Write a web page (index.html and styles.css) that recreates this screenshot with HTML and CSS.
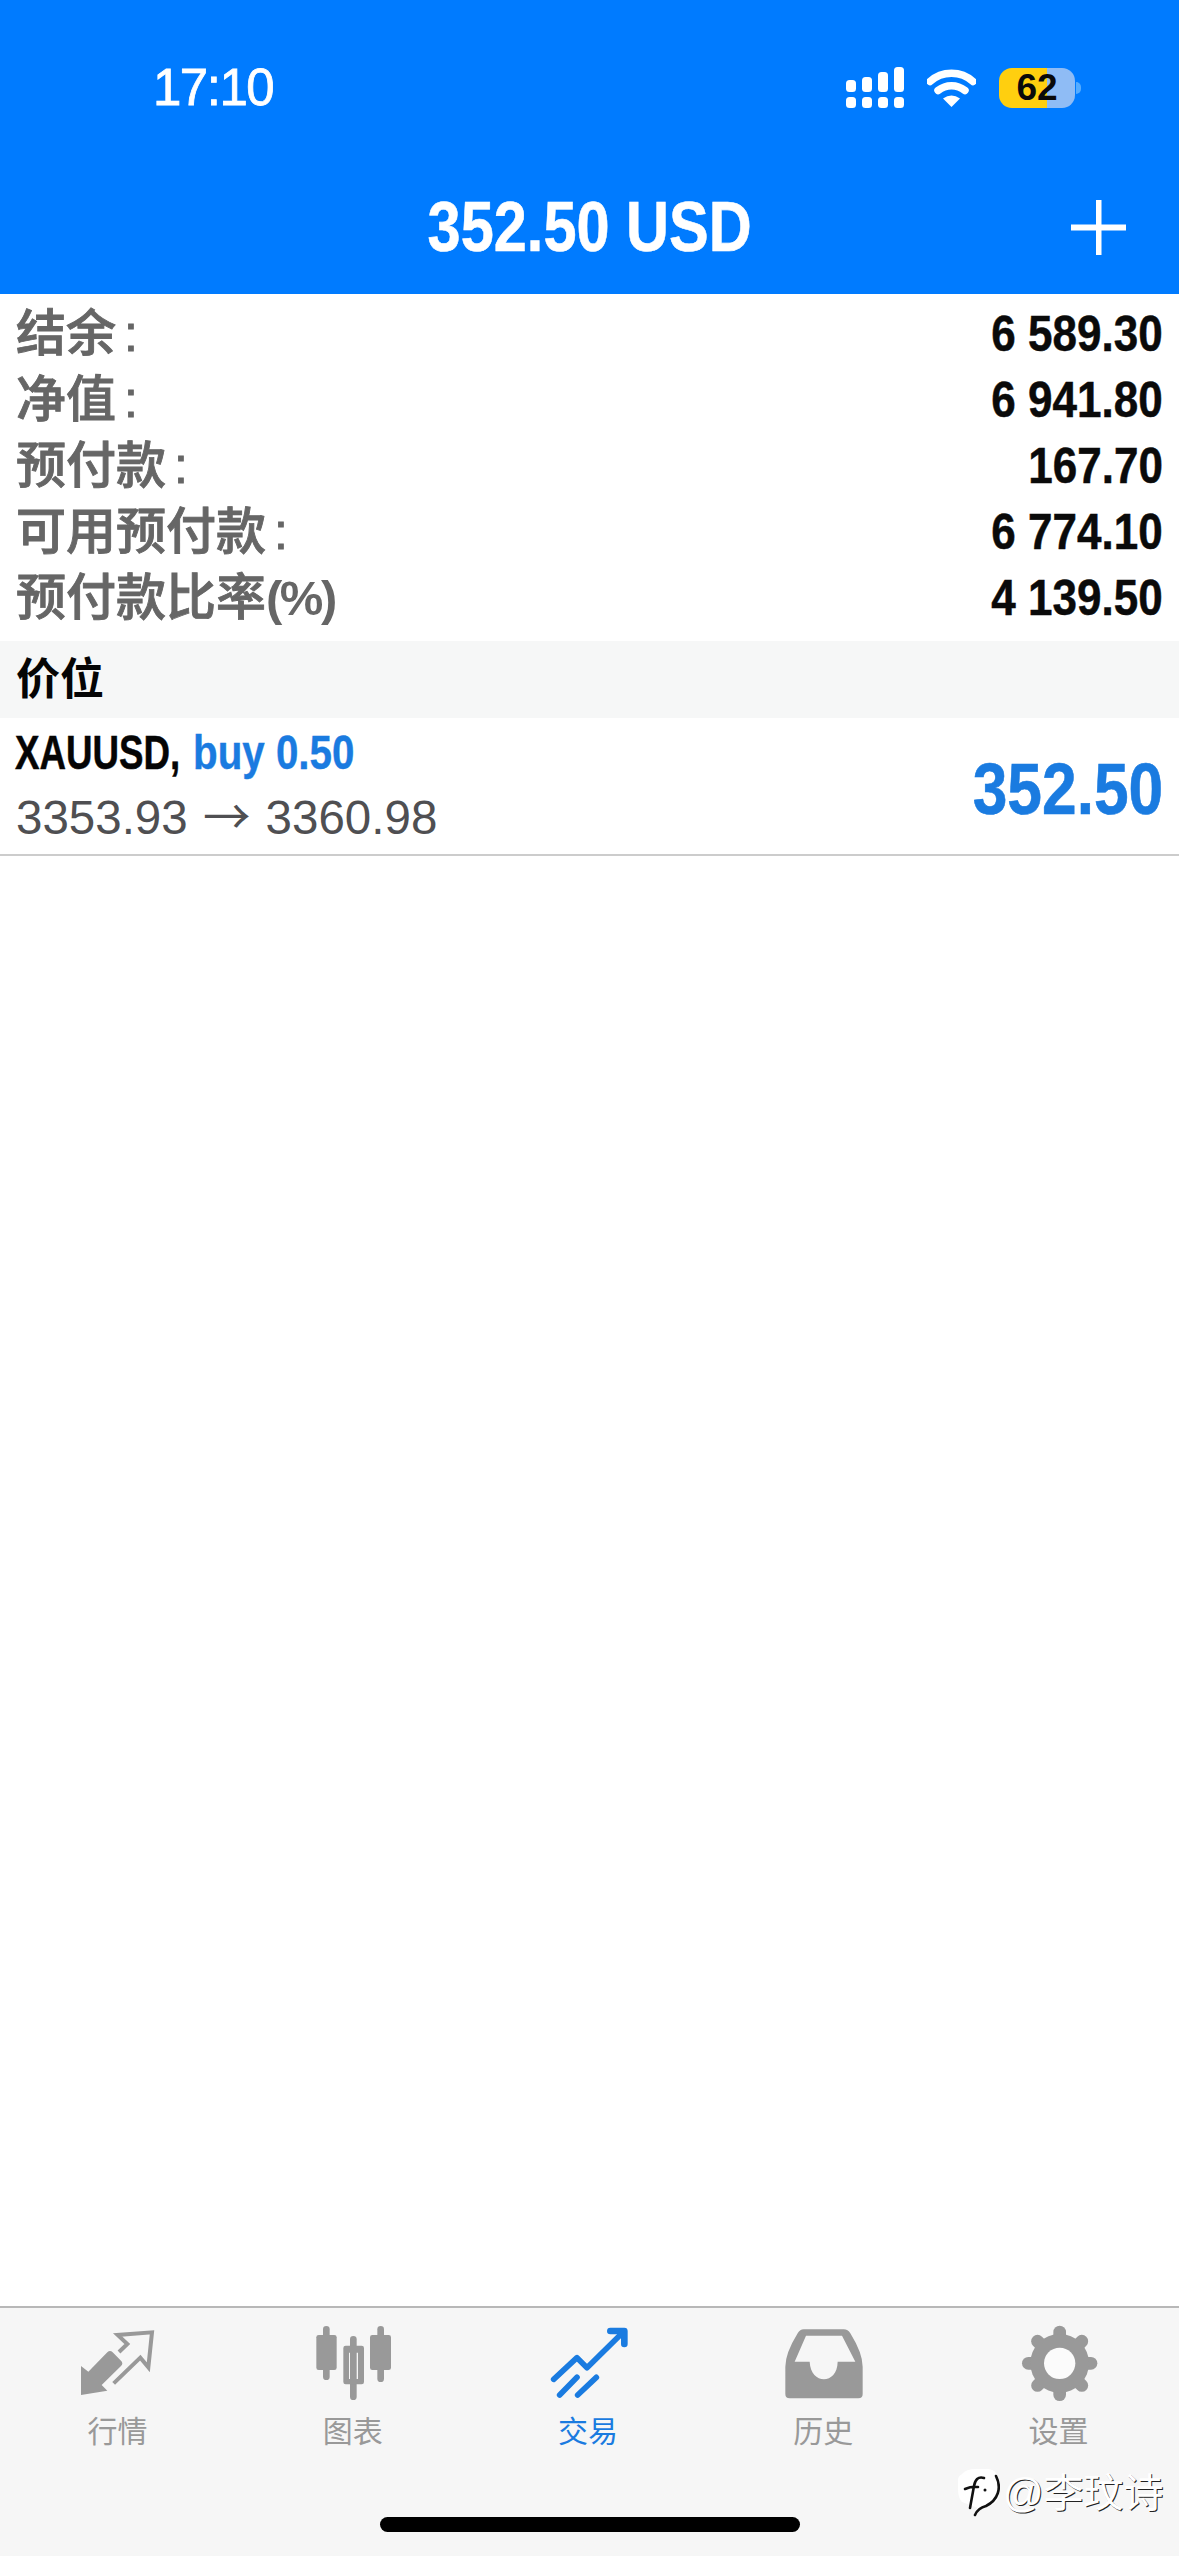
FILE: index.html
```html
<!DOCTYPE html>
<html lang="zh-CN">
<head>
<meta charset="utf-8">
<title>MetaTrader 交易</title>
<link rel="stylesheet" href="styles.css">
</head>
<body>
<div class="phone">
  <header class="top">
    <div class="status">
      <span class="time">17:10</span>
      <div class="status-icons">
        <svg class="signal" width="58" height="41" viewBox="0 0 58 41" fill="#fff">
          <rect x="0" y="13" width="10" height="12" rx="3.5"/>
          <rect x="16" y="10" width="10" height="15" rx="3.5"/>
          <rect x="32" y="5" width="10" height="20" rx="3.5"/>
          <rect x="48" y="0" width="10" height="25" rx="3.5"/>
          <rect x="0" y="30" width="10" height="11" rx="3.5"/>
          <rect x="16" y="30" width="10" height="11" rx="3.5"/>
          <rect x="32" y="30" width="10" height="11" rx="3.5"/>
          <rect x="48" y="30" width="10" height="11" rx="3.5"/>
        </svg>
        <svg class="wifi" width="49" height="38" viewBox="0 0 49 38">
          <path d="M3 12.500C15 1.500 34 1.500 46 12.500" fill="none" stroke="#fff" stroke-width="7.500" stroke-linecap="round"/>
          <path d="M11 21.500C19 15 30 15 38 21.500" fill="none" stroke="#fff" stroke-width="7.500" stroke-linecap="round"/>
          <path d="M24.500 38L16 29.500Q24.500 23.500 33 29.500Z" fill="#fff"/>
        </svg>
        <div class="battery-wrap">
          <div class="battery"><span>62</span></div>
          <i class="nub"></i>
        </div>
      </div>
    </div>
    <div class="titlebar">
      <span></span>
      <h1 class="title"><span class="sq-title">352.50 USD</span></h1>
      <svg class="plus" width="55" height="55" viewBox="0 0 55 55" fill="#fff">
        <rect x="0" y="24.500" width="55" height="6"/>
        <rect x="25" y="0" width="5.500" height="55"/>
      </svg>
    </div>
  </header>

  <main class="content">
    <section class="summary">
      <div class="row"><span class="label">结余<span class="colon">:</span></span><span class="num">6 589.30</span></div>
      <div class="row"><span class="label">净值<span class="colon">:</span></span><span class="num">6 941.80</span></div>
      <div class="row"><span class="label">预付款<span class="colon">:</span></span><span class="num">167.70</span></div>
      <div class="row"><span class="label">可用预付款<span class="colon">:</span></span><span class="num">6 774.10</span></div>
      <div class="row"><span class="label">预付款比率<span class="pct">(%)</span></span><span class="num">4 139.50</span></div>
    </section>
    <div class="band">价位</div>
    <section class="position">
      <div class="pos-left">
        <div class="pos-head"><span class="sym">XAUUSD,</span><span class="side">buy 0.50</span></div>
        <div class="pos-prices">3353.93 <span class="arrow">→</span> 3360.98</div>
      </div>
      <span class="profit">352.50</span>
    </section>
  </main>

  <nav class="tabbar">
    <div class="tabs">
      <div class="tab">
        <svg class="tab-icon" viewBox="-6 0 300 270">
          <path d="M33 138L55 155L112 97Q120 89 128 97L153 122Q161 130 153 138L95 195L112 212L33 225Z" fill="#999"/>
          <path d="M147 96L172 72L143 45L246 37L235 142L211 113L131 190" fill="none" stroke="#999" stroke-width="12"/>
        </svg>
        <span class="tab-label">行情</span>
      </div>
      <div class="tab">
        <svg class="tab-icon" viewBox="-3 0 300 270" fill="#999">
          <rect x="57" y="18" width="20" height="162" rx="10"/>
          <rect x="37" y="45" width="61" height="105" rx="7"/>
          <rect x="138" y="48" width="20" height="192" rx="10"/>
          <path fill-rule="evenodd" d="M125 77H173Q180 77 180 84V186Q180 193 173 193H125Q118 193 118 186V84Q118 77 125 77ZM135 98V177H162V98Z"/>
          <rect x="220" y="18" width="20" height="168" rx="10"/>
          <rect x="198" y="45" width="63" height="105" rx="7"/>
        </svg>
        <span class="tab-label">图表</span>
      </div>
      <div class="tab active">
        <svg class="tab-icon" viewBox="-7 0 300 270" fill="none" stroke="#1a7be0" stroke-width="17" stroke-linecap="round" stroke-linejoin="round">
          <path d="M40 178L110 113L140 143L245 40"/>
          <path d="M210 33H252V72" stroke-width="20"/>
          <path d="M58 225L110 172"/>
          <path d="M112 225L168 172"/>
        </svg>
        <span class="tab-label">交易</span>
      </div>
      <div class="tab">
        <svg class="tab-icon" viewBox="-7 0 300 270">
          <path fill="#999" fill-rule="evenodd" d="M85 28H205Q218 28 225 40Q262 100 262 140V222Q262 235 249 235H43Q30 235 30 222V140Q30 100 67 40Q74 28 85 28ZM92 47L58 125H103C106 195 186 195 187 125H240L200 47Z"/>
        </svg>
        <span class="tab-label">历史</span>
      </div>
      <div class="tab">
        <svg class="tab-icon" viewBox="-7 0 300 270">
          <g stroke="#999" stroke-width="38" stroke-linecap="round">
            <path d="M148 36V224"/>
            <path d="M54 130H242"/>
            <path d="M81.500 63.500L214.500 196.500"/>
            <path d="M214.500 63.500L81.500 196.500"/>
          </g>
          <circle cx="148" cy="130" r="88" fill="#999"/>
          <circle cx="148" cy="130" r="47" fill="#fbfbfb"/>
        </svg>
        <span class="tab-label">设置</span>
      </div>
    </div>
    <div class="home-bar"></div>
  </nav>

  <div class="watermark">
    <svg class="wm-logo" width="42" height="50" viewBox="0 0 42 50">
      <path d="M4 6Q8 1 18 1H30Q41 2 41 16V28Q38 40 20 40L4 34Q0 30 0 20V12Q0 8 4 6Z" fill="#fff"/>
      <path d="M26 10C20 8 17 12 16 18L12 40M7 21Q14 18 20 19" fill="none" stroke="#111" stroke-width="2.600" stroke-linecap="round"/>
      <path d="M38 8C44 20 40 32 28 38Q20 40 17 47" fill="none" stroke="#111" stroke-width="2.600" stroke-linecap="round"/>
      <circle cx="27" cy="22" r="1.500" fill="#111"/>
    </svg>
    <span class="wm-text">@李玟诗</span>
  </div>
</div>
</body>
</html>
```

FILE: styles.css
```css
* { box-sizing: border-box; }

html, body {
  margin: 0;
  padding: 0;
  background: #fff;
}

body {
  font-family: "Liberation Sans", "Noto Sans CJK SC", sans-serif;
}

.phone {
  position: relative;
  width: 1179px;
  height: 2556px;
  display: flex;
  flex-direction: column;
  overflow: hidden;
}

/* Header */
.top {
  height: 294px;
  flex: none;
  padding-top: 67px;
  background: #007bff;
  color: #fff;
}

.status {
  height: 41px;
  display: flex;
  align-items: center;
  justify-content: space-between;
  padding: 0 98px 0 153px;
}

.time {
  font-size: 51px;
  line-height: 41px;
  letter-spacing: -1.500px;
  -webkit-text-stroke: 0.8px #fff;
}

.status-icons {
  display: flex;
  align-items: center;
  gap: 23px;
}

.signal, .wifi { display: block; }

.battery-wrap {
  display: flex;
  align-items: center;
  gap: 1px;
}

.battery {
  width: 76px;
  height: 40px;
  border-radius: 13px;
  background: linear-gradient(90deg, #ffcf0f 0, #ffcf0f 63%, #8fbcf5 63%, #8fbcf5 100%);
  display: flex;
  align-items: center;
  justify-content: center;
  color: #0a0a0a;
  font-size: 37px;
  font-weight: 700;
}

.nub {
  width: 5px;
  height: 12px;
  border-radius: 0 6px 6px 0;
  background: #55acff;
}

.titlebar {
  margin-top: 92px;
  height: 55px;
  display: grid;
  grid-template-columns: 1fr auto 1fr;
  align-items: center;
  padding: 0 53px;
}

.plus { justify-self: end; }

.title {
  margin: 0;
  font-size: 70px;
  line-height: 55px;
  font-weight: 700;
  white-space: nowrap;
}

.sq-title {
  display: inline-block;
  transform: scaleX(0.85);
  -webkit-text-stroke: 0.6px #fff;
}

/* Content */
.content {
  flex: 1;
  background: #fff;
}

.summary { padding: 7px 0 10px; }

.row {
  height: 66px;
  display: flex;
  align-items: center;
  justify-content: space-between;
  padding: 0 16px;
}

.label {
  font-size: 50px;
  line-height: 66px;
  font-weight: 500;
  color: #666;
  white-space: nowrap;
  -webkit-text-stroke: 0.9px #666;
}

.colon { margin-left: 8px; }

.pct {
  font-size: 49px;
  font-weight: 700;
  letter-spacing: -2.500px;
  -webkit-text-stroke: 0;
}

.num {
  display: inline-block;
  font-size: 50px;
  font-weight: 700;
  color: #0a0a0a;
  transform: scaleX(0.88);
  transform-origin: right center;
  white-space: nowrap;
  -webkit-text-stroke: 0.5px #0a0a0a;
}

.band {
  height: 77px;
  padding-left: 16px;
  background: #f6f7f7;
  color: #050505;
  font-size: 44px;
  line-height: 77px;
  font-weight: 700;
}

.position {
  height: 138px;
  display: flex;
  align-items: center;
  justify-content: space-between;
  padding: 0 16px 0 15px;
  border-bottom: 2px solid #ccc;
}

.pos-left { padding-bottom: 6px; }

.pos-head {
  display: flex;
  height: 60px;
  margin-bottom: 2px;
  align-items: center;
}

.sym, .side {
  display: inline-block;
  font-size: 48px;
  font-weight: 700;
  white-space: nowrap;
  transform-origin: left center;
}

.sym {
  width: 178px;
  color: #050505;
  transform: scaleX(0.765);
  -webkit-text-stroke: 0.5px #050505;
}

.side {
  color: #1a7be0;
  transform: scaleX(0.84);
  -webkit-text-stroke: 0.4px #1a7be0;
}

.pos-prices {
  height: 60px;
  padding-left: 1px;
  font-size: 47.500px;
  line-height: 60px;
  color: #4f4f52;
  white-space: nowrap;
}

.arrow {
  margin: 0 2px;
  font-family: "Noto Sans CJK SC", sans-serif;
}

.profit {
  display: inline-block;
  margin-top: 6px;
  font-size: 72px;
  font-weight: 700;
  color: #1a7be0;
  transform: scaleX(0.865);
  transform-origin: right center;
  -webkit-text-stroke: 0.6px #1a7be0;
}

/* Tab bar */
.tabbar {
  height: 250px;
  flex: none;
  display: flex;
  flex-direction: column;
  align-items: center;
  padding-top: 12px;
  background: #f6f6f6;
  border-top: 2px solid #b8b8b8;
}

.tabs {
  width: 100%;
  padding-right: 3px;
  display: grid;
  grid-template-columns: repeat(5, 1fr);
}

.tab {
  display: flex;
  flex-direction: column;
  align-items: center;
  color: #999;
}

.tab.active { color: #1a7be0; }

.tab-icon {
  display: block;
  width: 100px;
  height: 90px;
}

.tab-label {
  margin-top: 1px;
  font-size: 30px;
  line-height: 42px;
}

.home-bar {
  width: 420px;
  height: 15px;
  margin-top: auto;
  margin-bottom: 24px;
  border-radius: 8px;
  background: #000;
}

/* Watermark over the tab bar */
.watermark {
  position: absolute;
  left: 958px;
  top: 2468px;
  display: flex;
  align-items: center;
  gap: 3px;
}

.wm-logo { display: block; }

.wm-text {
  font-size: 40px;
  line-height: 50px;
  color: #fff;
  text-shadow: 1px 1px 0 #222;
  white-space: nowrap;
}
```
